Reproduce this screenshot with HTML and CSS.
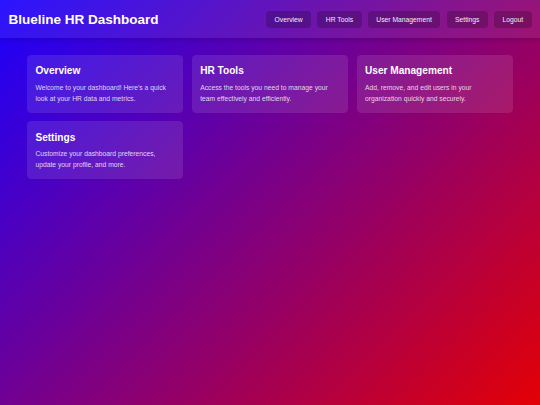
FILE: index.html
```html
<!DOCTYPE html>
<html lang="en">
<head>
<meta charset="utf-8">
<title>Blueline HR Dashboard</title>
<link rel="stylesheet" href="styles.css">
</head>
<body>
<header class="topbar">
  <h1 class="brand">Blueline HR Dashboard</h1>
  <nav class="nav">
    <a class="nav-btn" href="#">Overview</a>
    <a class="nav-btn" href="#">HR Tools</a>
    <a class="nav-btn" href="#">User Management</a>
    <a class="nav-btn" href="#">Settings</a>
    <a class="nav-btn" href="#">Logout</a>
  </nav>
</header>
<main class="content">
  <section class="card">
    <h2 class="card-title">Overview</h2>
    <p class="card-text">Welcome to your dashboard! Here's a quick look at your HR data and metrics.</p>
  </section>
  <section class="card">
    <h2 class="card-title">HR Tools</h2>
    <p class="card-text">Access the tools you need to manage your team effectively and efficiently.</p>
  </section>
  <section class="card">
    <h2 class="card-title">User Management</h2>
    <p class="card-text">Add, remove, and edit users in your organization quickly and securely.</p>
  </section>
  <section class="card">
    <h2 class="card-title">Settings</h2>
    <p class="card-text">Customize your dashboard preferences, update your profile, and more.</p>
  </section>
</main>
</body>
</html>
```
FILE: styles.css
```css
html {
  height: 100%;
}
body {
  margin: 0;
  min-height: 100%;
  font-family: "Liberation Sans", Arial, sans-serif;
  color: #fff;
  background: linear-gradient(135deg, #1a00ff 0%, #e40004 100%);
}
.topbar {
  height: 38px;
  box-sizing: border-box;
  padding: 0 8.4px;
  display: flex;
  align-items: center;
  justify-content: space-between;
  background: rgba(255, 255, 255, 0.08);
  box-shadow: 0 2px 4px rgba(0, 0, 0, 0.15);
}
.brand {
  margin: 0;
  font-size: 13.5px;
  font-weight: bold;
}
.nav {
  display: flex;
  gap: 6.4px;
}
.nav-btn {
  display: block;
  padding: 5px 8.4px;
  font-size: 6.75px;
  color: #f2ecf8;
  text-decoration: none;
  background: rgba(0, 0, 0, 0.2);
  border-radius: 4px;
}
.content {
  padding: 17px 27px;
  display: grid;
  grid-template-columns: repeat(3, 1fr);
  gap: 8.4px;
}
.card {
  background: rgba(255, 255, 255, 0.1);
  border-radius: 4.2px;
  padding: 10.4px 8.4px 8.4px;
}
.card-title {
  margin: 0;
  font-size: 10.125px;
  font-weight: bold;
}
.card-text {
  margin: 6.6px 0 0;
  font-size: 6.75px;
  line-height: 1.6;
  color: rgba(255, 255, 255, 0.82);
}
```
